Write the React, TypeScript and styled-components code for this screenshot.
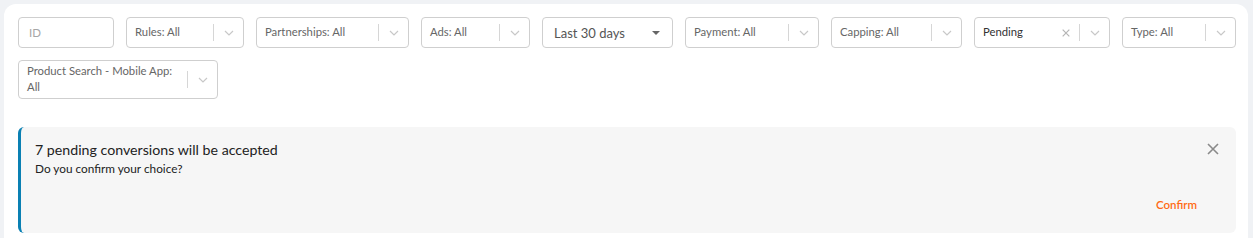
import React from "react";
import styled, { createGlobalStyle } from "styled-components";

const Global = createGlobalStyle`
  html, body { margin: 0; padding: 0; background: #f0f2f5; }
  body { font-family: Lato, "Open Sans", Arial, sans-serif; }
  * { box-sizing: border-box; }
`;

const Card = styled.div`
  margin: 4px 5px 0 4px;
  background: #fff;
  border-radius: 12px 12px 0 0;
  padding: 13px 12px 20px 14px;
  min-height: 240px;
`;

const Filters = styled.div`
  display: flex;
  flex-wrap: wrap;
  gap: 12px;
`;

const Input = styled.input<{ $w: number }>`
  width: ${(p) => p.$w}px;
  height: 31px;
  border: 1px solid #cfcfcf;
  border-radius: 4px;
  padding: 0 10px;
  font-family: Lato, sans-serif;
  font-size: 11.5px;
  color: #333;
  outline: none;
  &::placeholder { color: #a6a6a6; }
`;

const SelectBox = styled.div<{ $w: number; $tall?: boolean }>`
  width: ${(p) => p.$w}px;
  height: ${(p) => (p.$tall ? 39 : 31)}px;
  border: 1px solid #cfcfcf;
  border-radius: 4px;
  display: flex;
  align-items: center;
  background: #fff;
`;

const Label = styled.div<{ $dark?: boolean }>`
  flex: 1;
  padding-left: 8px;
  font-size: 11.3px;
  line-height: 16px;
  color: ${(p) => (p.$dark ? "#333" : "#666")};
  padding-bottom: 1px;
`;

const Sep = styled.span`
  width: 1px;
  height: 17px;
  background: #d6d6d6;
`;

const Indicator = styled.span`
  width: 29px;
  display: flex;
  justify-content: center;
  align-items: center;
  color: #c8c8c8;
`;

const ClearBtn = styled.span`
  width: 26px;
  display: flex;
  justify-content: center;
  align-items: center;
  color: #b5b5b5;
`;

const DateBox = styled.div<{ $w: number }>`
  width: ${(p) => p.$w}px;
  height: 31px;
  border: 1px solid #cfcfcf;
  border-radius: 4px;
  display: flex;
  align-items: center;
  justify-content: space-between;
  padding: 0 12px 0 11px;
  font-size: 13px;
  color: #555;
`;

const Alert = styled.div`
  margin-top: 28px;
  background: #f6f6f6;
  border-left: 3px solid #0a80b3;
  border-radius: 6px;
  height: 106px;
  padding: 13px 17px 0 14px;
  display: flex;
  flex-direction: column;
`;

const AlertHead = styled.div`
  display: flex;
  justify-content: space-between;
  align-items: flex-start;
`;

const Title = styled.div`
  font-size: 14.2px;
  line-height: 20px;
  color: #222;
`;

const Sub = styled.div`
  font-size: 11.8px;
  line-height: 17px;
  color: #222;
`;

const Close = styled.button`
  border: 0;
  background: none;
  padding: 0;
  margin-top: 3px;
  color: #8a8a8a;
  display: flex;
  cursor: pointer;
`;

const Actions = styled.div`
  margin-top: auto;
  display: flex;
  justify-content: flex-end;
  padding-bottom: 22px;
`;

const ConfirmBtn = styled.button`
  border: 0;
  background: none;
  padding: 0 22px 0 0;
  font-family: Lato, sans-serif;
  font-size: 11.5px;
  font-weight: 600;
  color: #ff6a13;
  cursor: pointer;
`;

const Chevron = () => (
  <svg width="10" height="6" viewBox="0 0 10 6" fill="none">
    <path d="M1 1l4 4 4-4" stroke="currentColor" strokeWidth="1.2" />
  </svg>
);

const Cross = ({ size, w }: { size: number; w: number }) => (
  <svg width={size} height={size} viewBox="0 0 12 12" fill="none">
    <path d="M1 1l10 10M11 1L1 11" stroke="currentColor" strokeWidth={w} />
  </svg>
);

const Select = ({
  label,
  w,
  tall,
  clearable,
}: {
  label: React.ReactNode;
  w: number;
  tall?: boolean;
  clearable?: boolean;
}) => (
  <SelectBox $w={w} $tall={tall}>
    <Label $dark={clearable}>{label}</Label>
    {clearable && (
      <ClearBtn>
        <Cross size={8} w={1.8} />
      </ClearBtn>
    )}
    <Sep />
    <Indicator>
      <Chevron />
    </Indicator>
  </SelectBox>
);

export default function App() {
  return (
    <>
      <Global />
      <Card>
        <Filters>
          <Input $w={96} placeholder="ID" />
          <Select label="Rules: All" w={118} />
          <Select label="Partnerships: All" w={153} />
          <Select label="Ads: All" w={109} />
          <DateBox $w={131}>
            <span>Last 30 days</span>
            <svg width="8" height="4" viewBox="0 0 8 4">
              <path d="M0 0h8L4 4z" fill="#666" />
            </svg>
          </DateBox>
          <Select label="Payment: All" w={134} />
          <Select label="Capping: All" w={131} />
          <Select label="Pending" w={136} clearable />
          <Select label="Type: All" w={114} />
          <Select
            label={
              <>
                Product Search - Mobile App:
                <br />
                All
              </>
            }
            w={200}
            tall
          />
        </Filters>
        <Alert>
          <AlertHead>
            <div>
              <Title>7 pending conversions will be accepted</Title>
              <Sub>Do you confirm your choice?</Sub>
            </div>
            <Close aria-label="close">
              <Cross size={12} w={1.6} />
            </Close>
          </AlertHead>
          <Actions>
            <ConfirmBtn>Confirm</ConfirmBtn>
          </Actions>
        </Alert>
      </Card>
    </>
  );
}
